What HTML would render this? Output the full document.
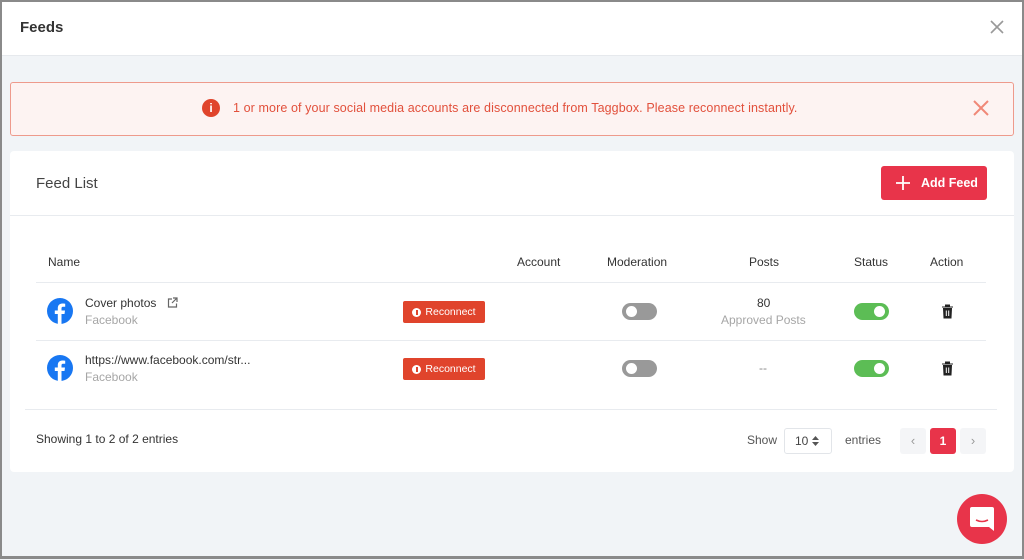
<!DOCTYPE html><html><head><style>
*{box-sizing:border-box;margin:0;padding:0}
body{width:1024px;height:560px;overflow:hidden;font-family:"Liberation Sans",sans-serif;background:#f1f4f7;position:relative}
.frame{position:absolute;left:0;top:0;width:1024px;height:559px;border:2px solid #8a8a8a;border-bottom-width:3px}
.hdr{position:absolute;left:2px;top:2px;width:1020px;height:54px;background:#fff;border-bottom:1px solid #e6e9ed}
.a{position:absolute}
.t{font-size:13px;color:#333}
.alert{left:10px;top:82px;width:1004px;height:54px;background:#fdf3f2;border:1px solid #ee9a8c;border-radius:3px}
.card{left:10px;top:151px;width:1004px;height:321px;background:#fff;border-radius:4px}
.line{position:absolute;height:1px;background:#e8ebef}
.g{color:#a6a6a6;font-size:12px}
.rc{position:absolute;width:82px;height:22px;background:#e0442c;border-radius:2px;color:#fff;font-size:10.5px;display:flex;align-items:center;justify-content:center;gap:4px}
.rc i{width:9px;height:9px;border-radius:50%;background:#fff;display:inline-block;position:relative}
.rc i:after{content:"";position:absolute;left:4px;top:2px;width:1.5px;height:5px;background:#e0442c}
.tg{position:absolute;width:35px;height:17px;border-radius:9px}
.tg:after{content:"";position:absolute;top:3px;width:11px;height:11px;border-radius:50%;background:#fff}
.off{background:#999}.off:after{left:4px}
.on{background:#5cbd55}.on:after{right:4px}
</style></head><body>
<div class="hdr"></div>
<div class="a" style="left:20px;top:19px;font-size:15px;font-weight:bold;color:#333">Feeds</div>
<svg class="a" style="left:990px;top:20px" width="14" height="14"><path d="M1 1L13 13M13 1L1 13" stroke="#999" stroke-width="1.6"/></svg>
<div class="a alert"></div>
<div class="a" style="left:202px;top:99px;width:18px;height:18px;border-radius:50%;background:#e0442c;color:#fff;font-size:12px;font-weight:bold;text-align:center;line-height:18px">i</div>
<div class="a" style="left:233px;top:101px;font-size:12.5px;color:#e2503c;letter-spacing:0.1px">1 or more of your social media accounts are disconnected from Taggbox. Please reconnect instantly.</div>
<svg class="a" style="left:973px;top:100px" width="16" height="16"><path d="M1 1L15 15M15 1L1 15" stroke="#f08878" stroke-width="2"/></svg>
<div class="a card"></div>
<div class="a" style="left:36px;top:175px;font-size:15px;color:#444">Feed List</div>
<div class="a" style="left:881px;top:166px;width:106px;height:34px;background:#e8344a;border-radius:3px;color:#fff;font-size:12.5px;font-weight:bold;line-height:34px;padding-left:40px">Add Feed</div>
<svg class="a" style="left:896px;top:176px" width="14" height="14"><path d="M7 0V14M0 7H14" stroke="#fff" stroke-width="1.8"/></svg>
<div class="line" style="left:10px;top:215px;width:1004px"></div>
<div class="a t" style="left:48px;top:255px;font-size:12px">Name</div>
<div class="a t" style="left:517px;top:255px;font-size:12px">Account</div>
<div class="a t" style="left:607px;top:255px;font-size:12px">Moderation</div>
<div class="a t" style="left:749px;top:255px;font-size:12px">Posts</div>
<div class="a t" style="left:854px;top:255px;font-size:12px">Status</div>
<div class="a t" style="left:930px;top:255px;font-size:12px">Action</div>
<div class="line" style="left:36px;top:282px;width:950px"></div>
<div class="line" style="left:36px;top:340px;width:950px"></div>
<div class="line" style="left:25px;top:409px;width:972px"></div>
<svg class="a" style="left:47px;top:298px" width="26" height="26"><circle cx="13" cy="13" r="13" fill="#1877f2"/><path d="M14.5 26V16h3l.5-3.5h-3.5v-2c0-1 .3-1.7 1.8-1.7h1.9V5.7c-.3 0-1.5-.2-2.8-.2-2.8 0-4.6 1.7-4.6 4.8v2.2H7.8V16h3V26z" fill="#fff"/></svg>
<svg class="a" style="left:47px;top:355px" width="26" height="26"><circle cx="13" cy="13" r="13" fill="#1877f2"/><path d="M14.5 26V16h3l.5-3.5h-3.5v-2c0-1 .3-1.7 1.8-1.7h1.9V5.7c-.3 0-1.5-.2-2.8-.2-2.8 0-4.6 1.7-4.6 4.8v2.2H7.8V16h3V26z" fill="#fff"/></svg>
<div class="a t" style="left:85px;top:296px;font-size:12px;color:#333">Cover photos</div>
<svg class="a" style="left:167px;top:297px" width="11" height="11"><path d="M5 2H1.5v8h8V6.5M6 1h4v4M10 1L5 6" stroke="#666" stroke-width="1.2" fill="none"/></svg>
<div class="a g" style="left:85px;top:313px">Facebook</div>
<div class="a t" style="left:85px;top:353px;font-size:12px;color:#333">https://www.facebook.com/str...</div>
<div class="a g" style="left:85px;top:370px">Facebook</div>
<div class="rc" style="left:403px;top:301px"><i></i>Reconnect</div>
<div class="rc" style="left:403px;top:358px"><i></i>Reconnect</div>
<div class="tg off" style="left:622px;top:303px"></div>
<div class="tg off" style="left:622px;top:360px"></div>
<div class="tg on" style="left:854px;top:303px"></div>
<div class="tg on" style="left:854px;top:360px"></div>
<div class="a t" style="left:757px;top:296px;font-size:12px">80</div>
<div class="a g" style="left:721px;top:313px">Approved Posts</div>
<div class="a g" style="left:759px;top:361px;color:#888">--</div>
<svg class="a" style="left:941px;top:304px" width="13" height="15"><path d="M1 3H12M4.5 3V1H8.5V3M2.5 4.5H10.5L10 14H3Z" fill="#222" stroke="#222" stroke-width="1"/><path d="M5.3 6.5V12M7.7 6.5V12" stroke="#fff" stroke-width="1"/></svg>
<svg class="a" style="left:941px;top:361px" width="13" height="15"><path d="M1 3H12M4.5 3V1H8.5V3M2.5 4.5H10.5L10 14H3Z" fill="#222" stroke="#222" stroke-width="1"/><path d="M5.3 6.5V12M7.7 6.5V12" stroke="#fff" stroke-width="1"/></svg>
<div class="a t" style="left:36px;top:432px;font-size:12px">Showing 1 to 2 of 2 entries</div>
<div class="a t" style="left:747px;top:433px;font-size:12px;color:#555">Show</div>
<div class="a" style="left:784px;top:428px;width:48px;height:26px;border:1px solid #e2e5e9;border-radius:3px;font-size:12px;color:#444;line-height:24px;padding-left:10px">10</div>
<svg class="a" style="left:812px;top:436px" width="7" height="10"><path d="M0 4L3.5 0L7 4ZM0 6L3.5 10L7 6Z" fill="#555"/></svg>
<div class="a t" style="left:845px;top:433px;font-size:12px;color:#555">entries</div>
<div class="a" style="left:900px;top:428px;width:26px;height:26px;background:#f4f5f7;border-radius:3px;color:#999;text-align:center;line-height:26px;font-size:13px">&#8249;</div>
<div class="a" style="left:930px;top:428px;width:26px;height:26px;background:#e8344a;border-radius:3px;color:#fff;text-align:center;line-height:26px;font-size:12px;font-weight:bold">1</div>
<div class="a" style="left:960px;top:428px;width:26px;height:26px;background:#f4f5f7;border-radius:3px;color:#999;text-align:center;line-height:26px;font-size:13px">&#8250;</div>
<div class="a" style="left:957px;top:494px;width:50px;height:50px;border-radius:50%;background:#e8344a"></div>
<svg class="a" style="left:969px;top:506px" width="26" height="26"><path d="M3 1H23Q25 1 25 3V25L20 21H3Q1 21 1 19V3Q1 1 3 1Z" fill="#fff"/><path d="M7 14Q13 17 19 14" stroke="#e8344a" stroke-width="1.6" fill="none"/></svg>
<div class="frame"></div>
</body></html>
